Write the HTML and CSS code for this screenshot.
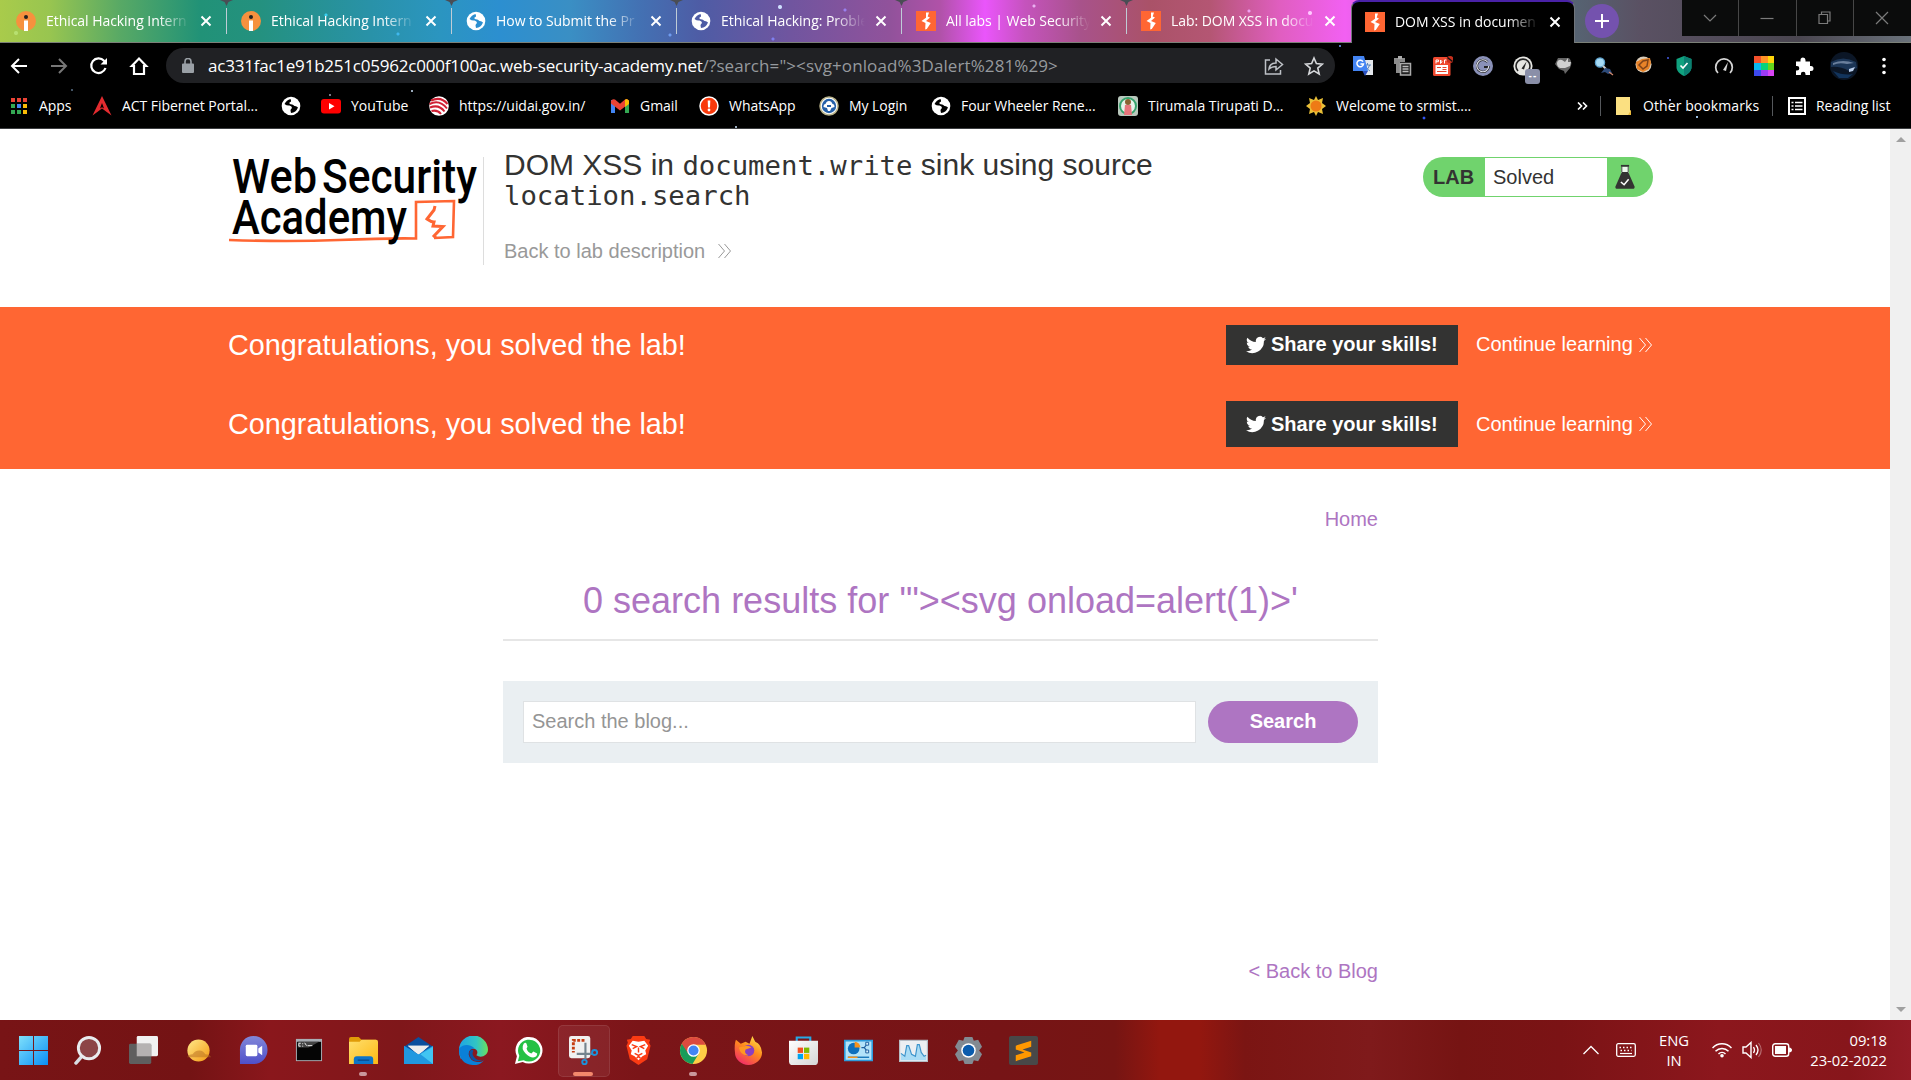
FILE: index.html
```html
<!DOCTYPE html>
<html lang="en">
<head>
<meta charset="utf-8">
<title>DOM XSS in document.write sink using source location.search</title>
<link rel="stylesheet" href="styles.css">
</head>
<body>
<svg class="defs" width="0" height="0" aria-hidden="true">
  <defs>
    <linearGradient id="gWin" x1="0" y1="0" x2="1" y2="1"><stop offset="0" stop-color="#7fe0fb"/><stop offset="1" stop-color="#0a8ef5"/></linearGradient>
    <linearGradient id="gSun" x1="0" y1="0" x2="1" y2="1"><stop offset="0" stop-color="#ffe98a"/><stop offset="1" stop-color="#f59a12"/></linearGradient>
    <linearGradient id="gChat" x1="0" y1="0" x2="0" y2="1"><stop offset="0" stop-color="#8187d8"/><stop offset="1" stop-color="#4f4fc9"/></linearGradient>
    <linearGradient id="gFold" x1="0" y1="0" x2="1" y2="1"><stop offset="0" stop-color="#ffdf6d"/><stop offset="1" stop-color="#fdb813"/></linearGradient>
    <linearGradient id="gEdge" x1="0" y1="0" x2="1" y2="0"><stop offset="0" stop-color="#1fa4e4"/><stop offset=".6" stop-color="#31c5c4"/><stop offset="1" stop-color="#6be05c"/></linearGradient>
    <linearGradient id="gFox" x1=".8" y1="0" x2=".2" y2="1"><stop offset="0" stop-color="#ffe14a"/><stop offset=".45" stop-color="#ff8a1c"/><stop offset="1" stop-color="#f0246f"/></linearGradient>
    <linearGradient id="gStore" x1="0" y1="0" x2="1" y2="1"><stop offset="0" stop-color="#fff"/><stop offset="1" stop-color="#d5d5d5"/></linearGradient>
    <symbol id="globe" viewBox="0 0 20 20"><circle cx="10" cy="10" r="9.300" fill="#fff"/><path d="M9.500 3Q5.500 4 3.500 8q2.500 2 5 1.500 2.500.5 2.500 2.500-1.500 1-1.500 2.500l.5 2.500q5-.5 7-5.500-1.500-1.700-3.500-1.500-1.500-2-4-1.800-1.700-.5-1-1.700 2-.3 1.500-2z" fill="currentColor"/></symbol>
    <symbol id="intern" viewBox="0 0 20 20"><circle cx="10" cy="10" r="10" fill="#f6913e"/><circle cx="10" cy="6" r="2" fill="#222"/><path d="M8 9.500h4V20H8z" fill="#fff"/></symbol>
    <symbol id="burp" viewBox="0 0 20 20"><path d="M0 0h20v20H0z" fill="#f63"/><path d="M10 1.500v5.200L5.500 10l4 2-.3 6.500 1.600-.4 4-6-4.800-2.200 4-3.400-2.300-1 1.300-4z" fill="#fff"/></symbol>
    <symbol id="close" viewBox="0 0 12 12"><path d="m1.500 1.500 9 9m0-9-9 9" stroke="#fff" stroke-width="2" fill="none"/></symbol>
    <symbol id="bird" viewBox="0 0 24 24"><path d="M24 4.600a10 10 0 0 1-2.800.8 5 5 0 0 0 2.200-2.700c-1 .5-2 .9-3.100 1.200a4.900 4.900 0 0 0-8.400 4.500A14 14 0 0 1 1.700 3.200a4.900 4.900 0 0 0 1.500 6.500c-.8 0-1.600-.2-2.200-.6a4.900 4.900 0 0 0 3.900 4.900 5 5 0 0 1-2.200.1 4.900 4.900 0 0 0 4.600 3.400A9.900 9.900 0 0 1 0 19.500a14 14 0 0 0 21.500-12.400A10 10 0 0 0 24 4.600z" fill="#fff"/></symbol>
    <symbol id="chev" viewBox="0 0 14 16"><path d="m1 1 6 7-6 7M7 1l6 7-6 7" fill="none" stroke="currentColor" stroke-width="1"/></symbol>
  </defs>
</svg>

<div class="chrome">
  <div class="strip">
    <div class="tab"><svg class="fav"><use href="#intern"/></svg><span class="label">Ethical Hacking Intern</span><svg class="x"><use href="#close"/></svg></div>
    <div class="tab"><svg class="fav"><use href="#intern"/></svg><span class="label">Ethical Hacking Intern</span><svg class="x"><use href="#close"/></svg></div>
    <div class="tab blue"><svg class="fav"><use href="#globe"/></svg><span class="label">How to Submit the Pr</span><svg class="x"><use href="#close"/></svg></div>
    <div class="tab violet"><svg class="fav"><use href="#globe"/></svg><span class="label">Ethical Hacking: Proble</span><svg class="x"><use href="#close"/></svg></div>
    <div class="tab"><svg class="fav"><use href="#burp"/></svg><span class="label">All labs | Web Security</span><svg class="x"><use href="#close"/></svg></div>
    <div class="tab last"><svg class="fav"><use href="#burp"/></svg><span class="label">Lab: DOM XSS in docu</span><svg class="x"><use href="#close"/></svg></div>
    <div class="tab active"><svg class="fav"><use href="#burp"/></svg><span class="label">DOM XSS in documen</span><svg class="x"><use href="#close"/></svg></div>
    <div class="plus"><svg width="16" height="16" viewBox="0 0 16 16"><path d="M8 1v14M1 8h14" stroke="#fff" stroke-width="2"/></svg></div>
    <div class="controls">
      <span><svg width="16" height="16" viewBox="0 0 16 16"><path d="m2 5 6 6 6-6"/></svg></span>
      <span><svg width="16" height="16" viewBox="0 0 16 16"><path d="M1.500 8.500h13"/></svg></span>
      <span><svg width="16" height="16" viewBox="0 0 16 16"><path d="M2 4.500h8.500v9H2zM4.500 4V2H13v9h-2.500"/></svg></span>
      <span><svg width="16" height="16" viewBox="0 0 16 16"><path d="m2 2 12 12M14 2 2 14"/></svg></span>
    </div>
  </div>

  <div class="toolbar">
    <div class="nav">
      <svg viewBox="0 0 20 20"><path d="M18 10H3m7-7-7 7 7 7" fill="none" stroke="#fff" stroke-width="2"/></svg>
      <svg viewBox="0 0 20 20"><path d="M2 10h15m-7-7 7 7-7 7" fill="none" stroke="#777" stroke-width="2"/></svg>
      <svg viewBox="0 0 20 20"><path d="M16.500 12A7.300 7.300 0 1 1 15 4.800l2 2" fill="none" stroke="#fff" stroke-width="2.200"/><path d="M18 2v6.500h-6.500z" fill="#fff"/></svg>
      <svg viewBox="0 0 20 20"><path d="M5 18V10H2.800L10 2.500 17.200 10H15v8z" fill="none" stroke="#fff" stroke-width="2.200"/></svg>
    </div>
    <div class="omni">
      <svg width="12" height="15" viewBox="0 0 12 15"><path d="M1 5.500h10a1 1 0 0 1 1 1V14a1 1 0 0 1-1 1H1a1 1 0 0 1-1-1V6.500a1 1 0 0 1 1-1z" fill="#9aa0a6"/><path d="M3 6V3.500a3 3 0 0 1 6 0V6" fill="none" stroke="#9aa0a6" stroke-width="1.600"/></svg>
      <span class="url">ac331fac1e91b251c05962c000f100ac.web-security-academy.net<i>/?search="&gt;&lt;svg+onload%3Dalert%281%29&gt;</i></span>
      <svg class="share" width="20" height="20" viewBox="0 0 20 20"><path d="M6 4H1.500v14h15v-4" fill="none" stroke="#bdc1c6" stroke-width="1.500"/><path d="M5 13c.5-4 3-6 7-6V3l6.500 5.500L12 14v-3.500c-3 0-5 .500-7 2.500z" fill="none" stroke="#bdc1c6" stroke-width="1.500"/></svg>
      <svg width="20" height="20" viewBox="0 0 20 20"><path d="m10 2 2.400 5.600 6 .5-4.600 4 1.400 5.900L10 14.900 4.800 18l1.400-5.900-4.600-4 6-.5z" fill="none" stroke="#d5d7da" stroke-width="1.600"/></svg>
    </div>
    <div class="exts">
      <svg viewBox="0 0 20 20"><path d="M8 4h12v15H12z" fill="#e3e7ec"/><path d="M11 9h7m-3.500-2v2m-3 6c3-1 4-3 5-6m-4 1c1 2 3 4 4.500 5" stroke="#5a86c0" fill="none"/><path d="M0 0h11l4 15H0z" fill="#4384f3"/><path d="M9.500 15H15l-3 5z" fill="#2a50c0"/><path d="M10 5.700A3.300 3.300 0 1 0 10.500 8H7.500" stroke="#fff" stroke-width="1.500" fill="none"/></svg>
      <svg viewBox="0 0 20 20"><path d="M1 2h11v4H7v11H3V8H1z" fill="#8c8c8c"/><path d="M5 0h4v3H5z" fill="#aaa"/><path d="M7.500 7.500h10v11.500h-10z" fill="#222" stroke="#aaa" stroke-width="1.500"/><path d="M9.500 10.500h6m-6 2.500h6m-6 2.500h6" stroke="#bbb" stroke-width="1.300"/></svg>
      <svg viewBox="0 0 20 20"><rect x="0" y="1" width="17.500" height="19" rx="1.500" fill="#f0492f"/><path d="M2.500 9h12.500v9H2.500z" fill="#fff"/><path d="M4 11.500h4M4 15.500h9.500m-4-4h4m-4 2h4" stroke="#e9442c"/><path d="M3 7.500V4h2.500v1.700H3M7.500 4v3.500q3-1.800 0-3.500M11.500 7.500V4H14" stroke="#fff" fill="none"/><circle cx="17" cy="3.500" r="3.500" fill="#c62f1c"/><path d="m14.500 1.500 5 4" stroke="#111" stroke-width="1.500"/></svg>
      <svg viewBox="0 0 20 20"><circle cx="10" cy="10" r="10" fill="#8a91b8"/><path d="M14.500 6a6 6 0 1 0 1.300 5H11" stroke="#222" stroke-width="2.200" fill="none"/><path d="M14.500 6a6 6 0 1 0 1.300 4" stroke="#dfe2ef" stroke-width="1.200" fill="none"/></svg>
      <span class="badged"><svg viewBox="0 0 20 20"><circle cx="10" cy="10" r="9.600" fill="#e6e6e2"/><path d="M5 15a7 7 0 1 1 10 0" fill="none" stroke="#222" stroke-width="1.600"/><path d="m8.500 12.500 5-7-2.500 8z" fill="#222"/></svg><b>--</b></span>
      <svg viewBox="0 0 20 20"><path d="M4 2h11q4 4 1 10l-5 6-1-3-5-2-4-5z" fill="#666"/><path d="M3 7q1-4 5-3l3 2 3-4v4h3l-1 4-5 2H6Q3 11 3 7z" fill="#d0d0d0"/></svg>
      <svg viewBox="0 0 20 20"><circle cx="6" cy="6.500" r="4.600" fill="#a6dbf5" stroke="#5b9fcc" stroke-width="1.300"/><path d="m9 10 3 3" stroke="#ccc" stroke-width="2"/><path d="m7 17 4-5 5 1 2 4-4 1-3-2z" fill="#2d4a79"/><path d="m15 16 4 3" stroke="#d48b70" stroke-width="1.200"/></svg>
      <svg viewBox="0 0 20 20"><circle cx="9.500" cy="8.500" r="8" fill="#d9cdbb"/><path d="m2 6 6-3 8-1 1 5-2 6-6 3-6-3z" fill="#e88328"/><path d="m5 9 4-4 5-1-1 6-4 3z" fill="none" stroke="#7f4319" stroke-width="1.500"/></svg>
      <svg viewBox="0 0 20 20"><path d="m10 0 7.500 3v8c0 4-3 7-7.500 9-4.500-2-7.500-5-7.500-9V3z" fill="#10a27f"/><path d="M10 0 17.500 3v8c0 4-3 7-7.500 9z" fill="#0a7f71"/><path d="m6.500 9.500 2.500 2.500 4.500-5" stroke="#fff" stroke-width="1.600" fill="none"/></svg>
      <svg viewBox="0 0 20 20"><path d="M4 17A8.300 8.300 0 1 1 16 17" fill="none" stroke="#d5d5d5" stroke-width="1.700"/><path d="m9 14 5-8-2 9z" fill="#d5d5d5"/></svg>
      <svg viewBox="0 0 20 20"><path d="M0 0h7v7H0z" fill="#f4512c"/><path d="M7 0h7v7H7z" fill="#ff9226"/><path d="M14 0h6v7h-6z" fill="#ffd60a"/><path d="M0 7h7v7H0z" fill="#0ab8ef"/><path d="M7 7h7v7H7z" fill="#08d27c"/><path d="M14 7h6v7h-6z" fill="#65d61d"/><path d="M0 14h7v6H0z" fill="#3c49ee"/><path d="M7 14h7v6H7z" fill="#9d3bf5"/><path d="M14 14h6v6h-6z" fill="#d945f4"/></svg>
      <svg viewBox="0 0 20 20"><path d="M2 5.500h4.500V4a2.500 2.500 0 0 1 5 0v1.500H16V10h1a2.500 2.500 0 0 1 0 5h-1v4h-4.500v-1a2.300 2.300 0 0 0-4.600 0v1H2v-4.500h1a2.300 2.300 0 0 0 0-4.600H2z" fill="#fff"/></svg>
      <svg class="avatar" viewBox="0 0 28 28"><circle cx="14" cy="14" r="14" fill="#0b1626"/><path d="M1 10q12-7 25 0l1 6-8 3q-9-5-18-4z" fill="#1b3556"/><path d="M3 11q10-4 21 0l-7 1Q9 10 3 13z" fill="#6a7f9c"/><path d="m19 17 6-2-2 4-4 1z" fill="#b9cdea"/><path d="M3 19q11 5 20 3l-5 4H9z" fill="#12345c"/></svg>
      <svg viewBox="0 0 20 20"><circle cx="10" cy="3.500" r="1.800" fill="#fff"/><circle cx="10" cy="10" r="1.800" fill="#fff"/><circle cx="10" cy="16.500" r="1.800" fill="#fff"/></svg>
    </div>
  </div>

  <div class="marks">
    <div class="list">
      <a><svg viewBox="0 0 20 20"><path d="M2 2h4v4H2zM8 2h4v4H8zM14 2h4v4h-4z" fill="#ea4335"/><path d="M2 8h4v4H2zM2 14h4v4H2zM8 14h4v4H8z" fill="#34a853"/><path d="M8 8h4v4H8z" fill="#4285f4"/><path d="M14 8h4v4h-4zM14 14h4v4h-4z" fill="#fbbc05"/></svg><span>Apps</span></a>
      <a><svg viewBox="0 0 20 20"><path d="m10 0 9.500 19.500-9.500-7-9.500 7z" fill="#e32b2f"/><path d="m10 7 2 5.500-2-1.200-2 1.200z" fill="#000"/></svg><span>ACT Fibernet Portal...</span></a>
      <a><svg><use href="#globe"/></svg></a>
      <a><svg viewBox="0 0 20 20"><rect y="3" width="20" height="14.500" rx="3" fill="#f00"/><path d="m8 7 5.500 3.200L8 13.500z" fill="#fff"/></svg><span>YouTube</span></a>
      <a><svg viewBox="0 0 20 20"><circle cx="10" cy="10" r="9.800" fill="#fff"/><path d="M2 4.500Q12 0 18.500 8M.5 8q10-5 17.500 4.500M1 11.500q9-3.500 14.500 4M2.500 15q6-1.500 9.500 3" fill="none" stroke="#cf1f33" stroke-width="2"/></svg><span>https://uidai.gov.in/</span></a>
      <a><svg viewBox="0 0 20 20"><path d="M1 4h4v13H1z" fill="#4285f4"/><path d="M15 4h4v13h-4z" fill="#34a853"/><path d="M1 5q1-2.500 4-1.500l5 4.200 5-4.200q3-1 4 1.500v2.500l-9 7-9-7z" fill="#ea4335"/><path d="m15 4 1-1q2 0 3 2v3l-4 3z" fill="#fbbc04"/></svg><span>Gmail</span></a>
      <a><svg viewBox="0 0 20 20"><circle cx="10" cy="10" r="9" fill="#f9390b" stroke="#fff" stroke-width="1.500"/><path d="M8.700 4.500h2.600l-.3 7H9z" fill="#fff"/><circle cx="10" cy="14" r="1.400" fill="#fff"/></svg><span>WhatsApp</span></a>
      <a><svg viewBox="0 0 20 20"><circle cx="10" cy="10" r="9" fill="#fff" stroke="#b9b38a" stroke-width="1.500"/><circle cx="10" cy="10" r="7.200" fill="#2560a8"/><path d="M4.500 11q0-3 2-3 1-3 3.500-3t3.500 3q2 0 2 3l-3 1-1.500 3h-2l-1-3z" fill="#fff"/><path d="M8 9h4v2H8z" fill="#2560a8"/></svg><span>My Login</span></a>
      <a><svg><use href="#globe"/></svg><span>Four Wheeler Rene...</span></a>
      <a><svg viewBox="0 0 20 20"><rect width="20" height="20" rx="3" fill="#b9c8bd"/><circle cx="10" cy="10" r="8" fill="#e8f2ea" stroke="#36a36d" stroke-width="2"/><circle cx="10" cy="6" r="3" fill="#8a6333"/><path d="m6 19 1-10h6l1 10z" fill="#e8757d"/></svg><span>Tirumala Tirupati D...</span></a>
      <a><svg viewBox="0 0 20 20"><path d="m10 0 2 4 5-2-1 5 4 3-4 3 1 5-5-2-2 4-2-4-5 2 1-5-4-3 4-3-1-5 5 2z" fill="#e9bf37"/><circle cx="10" cy="10" r="5.500" fill="#ee7b16"/></svg><span>Welcome to srmist....</span></a>
    </div>
    <div class="right">
      <svg class="more" width="11" height="8" viewBox="0 0 11 8"><path d="m1 .5 3.500 3.500L1 7.500M6 .500 9.500 4 6 7.500" fill="none" stroke="#fff" stroke-width="1.600"/></svg>
      <a class="other"><svg viewBox="0 0 20 20"><path d="M2 1h14v13l1 1v4H2z" fill="#fbe081"/><path d="M17 14v5h-3z" fill="#eab93a"/></svg><span>Other bookmarks</span></a>
      <a class="read"><svg viewBox="0 0 20 20"><rect x="2" y="2" width="16" height="16" fill="none" stroke="#fff" stroke-width="2"/><path d="M4.500 6.500h2m-2 3.500h2m-2 3.500h2m1.500-7h7.500M8 10h7.500M8 13.500h7.500" stroke="#fff" stroke-width="1.700"/></svg><span>Reading list</span></a>
    </div>
  </div>
</div>

<div class="view">
  <main class="page">
    <header class="head">
      <div class="logo">
        <svg width="255" height="108" viewBox="0 0 255 108">
          <path d="M1 83q60 2 110 0t77-1.500V45l38-1-1 36-19 1" fill="none" stroke="#f63" stroke-width="2.600"/>
          <path d="m207 49-1 4-7 9q4 3 7 3l-1 4 10 .5-9 9.500 2 2" fill="none" stroke="#f63" stroke-width="3"/>
          <text x="4" y="36" textLength="85" lengthAdjust="spacingAndGlyphs">Web</text>
          <text x="94" y="36" textLength="155" lengthAdjust="spacingAndGlyphs">Security</text>
          <text x="4" y="77" textLength="175" lengthAdjust="spacingAndGlyphs">Academy</text>
        </svg>
      </div>
      <div class="title">
        <h2>DOM XSS in <code>document.write</code> sink using source<br><code>location.search</code></h2>
        <a>Back to lab description<svg width="15" height="16"><use href="#chev"/></svg></a>
      </div>
      <div class="pill">
        <b>LAB</b><span>Solved</span>
        <svg width="20" height="26" viewBox="0 0 22 27"><path d="M7 2h8v8H7z" fill="#eefaee"/><path d="M6.500 1.200h9" stroke="#333" stroke-width="2"/><path d="M7.500 2v6m7-6v6" stroke="#333"/><path d="M7.500 8h7l7 16q.5 2.500-2 2.500h-17q-2.500 0-2-2.500z" fill="#333332"/><path d="m6.500 19 3.500 3 5-6" fill="none" stroke="#fff" stroke-width="1.700"/></svg>
      </div>
    </header>
    <section class="banner">
      <div class="row"><p>Congratulations, you solved the lab!</p><a class="share-btn"><svg width="20" height="20"><use href="#bird"/></svg>Share your skills!</a><a class="cont">Continue learning<svg width="15" height="16"><use href="#chev"/></svg></a></div>
      <div class="row tall"><p>Congratulations, you solved the lab!</p><a class="share-btn"><svg width="20" height="20"><use href="#bird"/></svg>Share your skills!</a><a class="cont">Continue learning<svg width="15" height="16"><use href="#chev"/></svg></a></div>
    </section>
    <section class="blog">
      <a class="home">Home</a>
      <h1>0 search results for '"&gt;&lt;svg onload=alert(1)&gt;'</h1>
      <form class="search"><input type="text" placeholder="Search the blog..."><button type="button">Search</button></form>
      <a class="back">&lt; Back to Blog</a>
    </section>
  </main>
  <div class="scroll"><i class="up"></i><i class="down"></i></div>
</div>

<footer class="taskbar">
  <div class="apps">
    <span><svg viewBox="0 0 30 30"><path d="M0 0h14.500v14.500H0zM15.500 0H30v14.500H15.500zM0 15.500h14.500V30H0zM15.500 15.500H30V30H15.500z" fill="url(#gWin)"/></svg></span>
    <span><svg viewBox="0 0 30 30"><path d="m9 20-7 8" stroke="#d8dee4" stroke-width="3.500" stroke-linecap="round"/><circle cx="15.500" cy="12.500" r="11" fill="#8c4547" stroke="#e9ecef" stroke-width="3"/></svg></span>
    <span><svg viewBox="0 0 30 30"><rect x="8" y="0" width="22" height="21" rx="1.500" fill="#f1f1f1"/><rect x="0" y="8" width="23" height="21" rx="1.500" fill="#5f5f5f"/><path d="M8 8h15v13H8z" fill="#b5b2b2"/></svg></span>
    <span><svg viewBox="0 0 30 30"><circle cx="15" cy="15" r="11.500" fill="url(#gSun)"/><path d="M3 22q2-3 6-3 2-4 7-4 4 0 6 4 5 0 6 3z" fill="#b36b22" opacity=".5"/></svg></span>
    <span><svg viewBox="0 0 30 30"><path d="M15 0a14 14 0 0 1 0 29H1V15A14 14 0 0 1 15 0z" fill="url(#gChat)"/><rect x="7" y="9" width="12" height="12" rx="1.500" fill="#fff"/><path d="m20 13 4-3v10l-4-3z" fill="#fff"/></svg></span>
    <span><svg viewBox="0 0 30 30"><path d="M2 3h27v23H2z" fill="#a9adb3"/><path d="M3 6h25v19H3z" fill="#050505"/><path d="M4 6h22L15 12H4z" fill="#444"/><path d="M5 7.500h2M5 7.500v3h2m2-3v1m0 1.500v1m2-4 2 3m1 0h5" stroke="#eee" fill="none"/></svg></span>
    <span class="run"><svg viewBox="0 0 30 30"><path d="M0 3q0-2 2-2h8l3 3h15v4H0z" fill="#e09b08"/><path d="M0 6h11l2-2h15q2 0 2 2v23H0z" fill="url(#gFold)"/><path d="M5 29v-5q0-3 3-3h14q3 0 3 3v5z" fill="#0d74c8"/><path d="M9 25h12" stroke="#0a4d91" stroke-width="1.500"/></svg></span>
    <span><svg viewBox="0 0 30 30"><path d="m15 1 15 10v6H0v-6z" fill="#0b4f9e"/><path d="M4 10h22L15 20z" fill="#eee"/><path d="m0 10 15 9 15-9v19H0z" fill="#2098e0"/><path d="M4 10h22l-11 9z" fill="#eee"/><path d="m30 11-13 8 13 10z" fill="#41c5f2"/></svg></span>
    <span><svg viewBox="0 0 30 30"><path d="M0 15a15 15 0 0 1 30-1c0 7-8 9-12 6 3-5-1-8-6-7L2 24Q0 20 0 15z" fill="url(#gEdge)"/><path d="M0 13q5-5 12-3 3 1 4 3-6 0-6 6 1 7 9 8 5 0 7-2-5 6-12 5Q0 29 0 13z" fill="#0a80d8"/><path d="M13 14q-3 2-2 6 2 7 10 6l6-2q-8 3-12-3-2-3 0-6z" fill="#0b53a5"/></svg></span>
    <span><svg viewBox="0 0 30 30"><path d="m1 29 2-8A14 13.800 0 1 1 9 27z" fill="#fff"/><path d="m4 26 1.500-5.500A11.500 11.300 0 1 1 10 25z" fill="#25c145"/><path d="M10 8q2-2 3 0l1 3-1 2q1 4 5 5l2-2 4 2q0 3-3 4-4 1-9-4-5-5-2-10z" fill="#fff"/></svg></span>
    <span class="sel"><svg viewBox="0 0 30 30"><rect width="22" height="23" rx="2.500" fill="#f0f0f0"/><path d="M16 4.500H4.500V17" fill="none" stroke="#c63c10" stroke-width="3" stroke-dasharray="3 1.500"/><path d="M17 7v17M8 18.500h16" stroke="#74838d" stroke-width="2.200"/><circle cx="26.500" cy="17" r="2.600" fill="none" stroke="#1b93dc" stroke-width="2"/><circle cx="16" cy="27" r="2.300" fill="none" stroke="#1b93dc" stroke-width="2"/></svg></span>
    <span><svg viewBox="0 0 30 30"><path d="M9 0 7 3 3 4l1 3-1.500 3L6 24l9 6 9-6 3.500-14L26 7l1-3-4-1-2-3z" fill="#fa3b13"/><path d="m9 5 6 1 6-1 4 5-3 5 1 4-4 2-4 4-4-4-4-2 1-4-3-5z" fill="#fff"/><path d="m8 9 5 2-4 2m13-4-5 2 4 2m-6-1v5m-4 1 4 2 4-2m-6 5 2-2 2 2" fill="none" stroke="#fa3b13" stroke-width="1.500"/></svg></span>
    <span class="run"><svg viewBox="0 0 30 30"><circle cx="15" cy="15" r="14" fill="#ffcd46"/><path d="M2.900 8A14 14 0 0 0 14 29l6.500-11L15 15z" fill="#199c5a"/><path d="M15 9h12.600A14 14 0 0 0 2.900 8L9.500 18z" fill="#dc4a3f"/><circle cx="15" cy="15" r="6.500" fill="#fff"/><circle cx="15" cy="15" r="5.200" fill="#4285f4"/></svg></span>
    <span><svg viewBox="0 0 30 30"><path d="m2 4 5 4 5-2 4 2 3-8 3 6q6 2 7 11a14 13 0 0 1-28 0Q0 9 2 4z" fill="url(#gFox)"/><circle cx="15" cy="15" r="6" fill="#8a3fc2"/><path d="m5 12 8-2q3 0 5 2l-6 2q-2 4 3 6-8 1-10-8z" fill="#ff9822"/></svg></span>
    <span><svg viewBox="0 0 30 30"><path d="M8 7V1.500h14V7" fill="none" stroke="#27a8e3" stroke-width="2.200"/><path d="M0 5h30v21q0 4-4 4H4q-4 0-4-4z" fill="url(#gStore)"/><path d="M9 12h5.500v5.500H9z" fill="#f25022"/><path d="M15.500 12H21v5.500h-5.500z" fill="#7fba00"/><path d="M9 18.500h5.500V24H9z" fill="#00a4ef"/><path d="M15.500 18.500H21V24h-5.500z" fill="#ffb900"/></svg></span>
    <span><svg viewBox="0 0 30 30"><path d="M.8 4.800h28.400v20.500H.8z" fill="#b3e3f9" stroke="#2d9cdc" stroke-width="1.700"/><circle cx="10" cy="13" r="6" fill="#0e6fbd"/><path d="M11 12V6a6 6 0 0 1 6 6z" fill="#f7931e"/><path d="M18 12h3l3-4m-3 4 3 4" stroke="#1e5f9f" stroke-width="1.200" fill="none"/><path d="M22.500 6.500h3v3h-3zm0 8h3v3h-3z" fill="#d9f0fb" stroke="#1e5f9f"/><path d="M4 22h22" stroke="#1d7abb" stroke-width="1.500"/><path d="M4 22h10" stroke="#f7931e" stroke-width="1.500"/></svg></span>
    <span><svg viewBox="0 0 30 30"><path d="M.6 4.600h28.800v21.800H.6z" fill="#eceff2" stroke="#b5bcc4" stroke-width="1.200"/><path d="M2 25v-7l4 3 2-11h2l3 9 4 2 2-12h2l2 8 3 4 2-1v5z" fill="#a9dcf5"/><path d="m2 18 4 3 2-11h2l3 9 4 2 2-12h2l2 8 3 4 2-1" fill="none" stroke="#3d94cb" stroke-width="1.200"/></svg></span>
    <span><svg viewBox="0 0 30 30"><path d="m11 1 8 0 1.500 4L25 4l4 7-3 4 3 4-4 7-4.500-1L19 29h-8l-1.500-4L5 26l-4-7 3-4-3-4 4-7 4.500 1z" fill="#828a92"/><circle cx="15" cy="15" r="7.500" fill="#fff"/><circle cx="15" cy="15" r="6" fill="#0a5cad"/></svg></span>
    <span><svg viewBox="0 0 30 30"><rect width="30" height="30" rx="2" fill="#484848"/><path d="m7 10 16-5v6l-9 3 9 3v4L7 26v-6l9-3-9-3z" fill="#ff9800"/></svg></span>
  </div>
  <div class="tray">
    <svg class="caret" width="16" height="10" viewBox="0 0 16 10"><path d="m.5 9 7.500-7.500L15.500 9" fill="none" stroke="#fff" stroke-width="1.300"/></svg>
    <svg class="kbd" width="20" height="14" viewBox="0 0 20 14"><rect x=".7" y=".7" width="18.600" height="12.600" rx="1.500" fill="none" stroke="#fff" stroke-width="1.300"/><path d="M3.500 4.500h13M4.500 7.500h11" stroke="#fff" stroke-width="1.500" stroke-dasharray="1.500 2"/><path d="M4 10.500h12" stroke="#fff" stroke-width="1.200"/></svg>
    <div class="lang">ENG<br>IN</div>
    <svg class="wifi" width="20" height="16" viewBox="0 0 20 16"><path d="M.5 6a13 13 0 0 1 19 0M3.500 9.200a9 9 0 0 1 13 0M6.500 12a5 5 0 0 1 7 0" fill="none" stroke="#fff" stroke-width="1.500"/><circle cx="10" cy="13.800" r="1.800" fill="#fff"/></svg>
    <svg class="vol" width="20" height="18" viewBox="0 0 20 18"><path d="M1 6h3l5-4.500v15L4 12H1z" fill="none" stroke="#fff" stroke-width="1.400"/><path d="M11.500 6q2 3 0 6M14 4q4 5 0 10" fill="none" stroke="#fff" stroke-width="1.300"/><path d="M16.500 2q5.500 7 0 14" fill="none" stroke="#b46a6d" stroke-width="1.200"/></svg>
    <svg class="bat" width="20" height="14" viewBox="0 0 20 14"><rect x=".7" y=".7" width="16" height="12.600" rx="2.500" fill="none" stroke="#fff" stroke-width="1.400"/><path d="M3 3h11v8H3z" fill="#fff"/><path d="M17 4.500q3 .5 3 2.500t-3 2.500z" fill="#fff"/></svg>
    <div class="clock">09:18<br>23-02-2022</div>
  </div>
</footer>
</body>
</html>
```
FILE: styles.css
```css
* { box-sizing: border-box; }
body { margin: 0; height: 1080px; display: flex; flex-direction: column; overflow: hidden; font-family: "Liberation Sans", Arial, sans-serif; background: #fff; }
.defs { position: absolute; }
svg { display: block; flex: none; }

/* browser window */
.chrome { height: 129px; background: #000; border-bottom: 1px solid #3b3d40; color: #fff; font: 14px/20px "Open Sans", "Noto Sans", sans-serif; letter-spacing: -.05px;
  background-image:
    radial-gradient(circle at 412px 91px, #9ab 0 1px, transparent 1.500px),
    radial-gradient(circle at 330px 95px, #778 0 1px, transparent 1.500px),
    radial-gradient(circle at 72px 90px, #456 0 1px, transparent 1.500px),
    radial-gradient(circle at 736px 127px, #9ab 0 1px, transparent 1.500px),
    radial-gradient(circle at 1424px 118px, #35e 0 1px, transparent 1.800px),
    radial-gradient(circle at 1340px 46px, #57b 0 1px, transparent 1.500px),
    radial-gradient(circle at 1670px 100px, #9ad 0 1px, transparent 1.500px),
    radial-gradient(circle at 1697px 117px, #9bd 0 1px, transparent 1.500px),
    radial-gradient(circle at 1668px 58px, #34a 0 1px, transparent 1.500px); }
.strip { height: 43px; display: flex; border-bottom: 1px solid #7b8078;
  background:
    radial-gradient(circle at 780px 7px, #cfe0ff 0 1.500px, transparent 2.500px),
    radial-gradient(circle at 16px 33px, #b7e070 0 1.500px, transparent 2.500px),
    radial-gradient(circle at 326px 15px, #3bd0f0 0 1px, transparent 2px),
    radial-gradient(circle at 398px 34px, #3fb8ee 0 1px, transparent 2px),
    radial-gradient(circle at 670px 35px, #6f9cf0 0 1px, transparent 2px),
    radial-gradient(circle at 773px 39px, #7f7ff0 0 1px, transparent 2px),
    radial-gradient(circle at 845px 10px, #9a80f0 0 1px, transparent 2px),
    radial-gradient(circle at 1034px 6px, #e9b0f0 0 1px, transparent 2px),
    radial-gradient(circle at 1249px 11px, #f0a0f0 0 1px, transparent 2px),
    radial-gradient(circle at 1310px 13px, #ffc8ff 0 1.500px, transparent 2.500px),
    linear-gradient(90deg, #a9cb4b 0, #98c550 50px, #58a965 120px, #219277 200px, #24917f 260px, #2992a8 370px, #2b95c0 440px, #2c8fd0 500px, #3a8fc4 570px, #4371b3 640px, #4e5ca5 700px, #70559f 790px, #91529b 890px, #b052a8 940px, #ea55fb 985px, #c553bd 1025px, #a8528b 1080px, #aa5268 1150px, #b45673 1210px, #e05ec0 1280px, #f260f2 1345px, #566372 1575px, #5a5163 1640px, #4a4650 1800px, #6a727b 1911px); }
.tab { position: relative; width: 225px; height: 42px; padding: 0 14px 0 14px; display: flex; align-items: center; border-image: linear-gradient(transparent 20%, #bfccd6 20% 80%, transparent 80%) 1; border-style: solid; border-width: 0 1px 0 0; }
.tab:not(.active, .last)::after { content: ""; position: absolute; right: -7px; top: 0; width: 13px; height: 6px; background: #4a4d54; clip-path: polygon(0 0, 100% 0, 65% 35%, 50% 100%, 35% 35%); }
.tab:first-child { width: 227px; padding-left: 16px; }
.tab.last { width: 224px; border-image: none; border-color: transparent; }
.tab.active { width: 224px; height: 43px; background: #000; border-image: none; border: 1px solid #70757b; border-width: 2px 1px 0; border-top-color: #4a22a8; border-radius: 8px 8px 0 0; padding: 0 13px 1px 13px; }
.fav { width: 20px; height: 20px; }
.blue .fav { color: #2c8fd0; }
.violet .fav { color: #4e5ca5; }
.label { flex: 1; margin-left: 10px; min-width: 0; white-space: nowrap; -webkit-mask-image: linear-gradient(90deg, #000 78%, transparent); mask-image: linear-gradient(90deg, #000 78%, transparent); }
.x { width: 12px; height: 12px; margin-left: 10px; }
.plus { width: 34px; height: 34px; margin: 4px 0 0 10px; border-radius: 50%; background: #7452ae; display: grid; place-items: center; }
.controls { margin-left: auto; width: 229px; height: 36px; display: grid; grid-template-columns: repeat(4, 1fr); background: #0b0c0c; }
.controls span { display: grid; place-items: center; border-right: 1px solid #474747; }
.controls span:last-child { border: 0; }
.controls path { fill: none; stroke: #7b7b7b; stroke-width: 1.200; }

.toolbar { height: 45px; display: flex; align-items: center; }
.nav { width: 166px; padding-left: 9px; display: flex; gap: 20px; }
.nav svg { width: 20px; height: 20px; }
.omni { width: 1169px; height: 35px; border-radius: 18px; background: #202124; display: flex; align-items: center; padding: 0 11px 0 16px; }
.url { flex: 1; margin-left: 14px; font-size: 17px; letter-spacing: -.22px; white-space: nowrap; }
.url i { font-style: normal; color: #969a9e; letter-spacing: .1px; }
.share { margin-right: 20px; }
.exts { margin-left: 8px; display: grid; grid-template-columns: repeat(14, 40.100px); place-items: center; }
.exts svg { width: 20px; height: 20px; color: #000; }
.exts .avatar { width: 28px; height: 28px; }
.badged { position: relative; }
.badged b { position: absolute; left: 12px; top: 13px; width: 15px; height: 15px; border-radius: 3px; background: #8a8fa8; font: bold 10px/14px "Liberation Sans", sans-serif; letter-spacing: 1px; text-align: center; }

.marks { height: 36px; display: flex; align-items: center; justify-content: space-between; color: #fff; }
.marks a { display: flex; align-items: center; gap: 10px; white-space: nowrap; }
.marks a svg { width: 20px; height: 20px; color: #000; }
.list { padding-left: 9px; display: grid; grid-template-columns: 83px 189px 40px 108px 181px 89px 120px 112px 187px 188px 170px; }
.right { display: flex; align-items: center; width: 334px; }
.more { margin-right: 12px; }
.right a { border-left: 1px solid #55585c; padding-left: 14px; }
.right a.other { width: 172px; padding-left: 13px; }
.right a.other span { letter-spacing: .08px; margin-left: -1px; }
.right a.read span { margin-left: -1px; }

/* page */
.view { height: 891px; display: flex; }
.page { flex: 1; }
.scroll { width: 21px; background: #f0f0f0; display: flex; flex-direction: column; justify-content: space-between; align-items: center; padding: 8px 0; }
.scroll i { border: 5px solid transparent; }
.scroll .up { border-bottom-color: #a0a0a0; border-top: 0; }
.scroll .down { border-top-color: #a0a0a0; border-bottom: 0; }
.head { height: 178px; padding: 28px 237px 0 228px; display: flex; }
.logo { width: 256px; height: 108px; border-right: 1px solid #ddd; }
.logo text { font: 500 47.500px Roboto, "Liberation Sans", sans-serif; }
.title { flex: 1; padding-left: 20px; }
h2 { margin: -7px 0 0; font-size: 30px; line-height: 30px; font-weight: 400; color: #333332; white-space: nowrap; }
code { font-family: "DejaVu Sans Mono", monospace; font-size: 27.300px; line-height: 0; }
.title a { margin-top: 29px; display: flex; align-items: center; gap: 12px; font-size: 20px; line-height: 24px; color: #999; }
.pill { width: 230px; height: 40px; border-radius: 20px; background: #70d36d; display: flex; align-items: center; font-size: 20px; color: #333332; }
.pill b { width: 62px; padding-left: 10px; }
.pill span { width: 122px; height: 38px; line-height: 38px; padding-left: 8px; background: #fff; margin-right: 8px; }
.banner { height: 162px; background: #f63; padding: 18px 237px 22px 228px; display: flex; flex-direction: column; gap: 36px; color: #fff; }
.row { height: 40px; display: flex; align-items: center; font-size: 20px; }
.row.tall { height: 46px; }
.row p { flex: 1; margin: 0; font-size: 28.800px; }
.share-btn { align-self: stretch; width: 232px; padding-left: 20px; background: #333332; font-weight: 700; display: flex; align-items: center; gap: 5px; }
.row:first-child .share-btn, .row:first-child .cont { padding-bottom: 1px; }
.cont { margin-left: 18px; width: 177px; display: flex; align-items: center; justify-content: space-between; white-space: nowrap; }
.blog { width: 875px; margin-left: 503px; display: flex; flex-direction: column; color: #ae75c2; font-size: 20px; line-height: 24px; }
.home { align-self: flex-end; margin-top: 38px; }
h1 { margin: 47px 0 0; height: 63px; font-size: 36px; line-height: 46px; font-weight: 400; text-align: center; border-bottom: 2px solid #e6e6e6; white-space: nowrap; }
.search { margin: 40px 0 0; height: 82px; padding: 20px; background: #eaeff2; display: flex; gap: 12px; }
input { flex: 1; min-width: 0; padding: 0 8px 2px; border: 1px solid #dfe2e4; background: #fff; font: 20px "Liberation Sans", sans-serif; }
input::placeholder { color: #959595; opacity: 1; }
button { width: 150px; padding-bottom: 3px; border: 0; border-radius: 21px; background: #ae75c2; color: #fff; font: bold 20px "Liberation Sans", sans-serif; }
.back { align-self: flex-end; margin-top: 196px; }

/* taskbar */
.taskbar { height: 60px; display: flex; justify-content: space-between; background: linear-gradient(90deg, #781416 0, #741314 190px, #8a171c 270px, #7f171a 400px, #8b1820 500px, #7b1518 640px, #761416 1000px, #761513 1115px, #93170f 1160px, #93170f 1200px, #7b1513 1245px, #7f1a1b 1370px, #761413 1460px, #7b1315 1560px, #8c171d 1720px, #87161b 1850px, #931b25 1911px); }
.apps { display: grid; grid-template-columns: repeat(19, 55px); padding-left: 5.500px; }
.apps span { position: relative; display: grid; place-items: center; }
.apps svg { width: 29px; height: 29px; position: relative; }
.sel::before { content: ""; position: absolute; left: 2px; top: 5px; width: 50px; height: 50px; border-radius: 5px; background: #ffffff10; border: 1px solid #ffffff18; }
.run::after, .sel::after { content: ""; position: absolute; left: 23px; top: 52px; width: 8px; height: 4px; border-radius: 2px; background: #c9989c; }
.sel::after { left: 17px; width: 20px; background: #f4886c; }
.tray { width: 328px; padding-right: 24px; display: flex; align-items: center; color: #fff; font: 14.800px/20px "Open Sans", "Noto Sans", sans-serif; letter-spacing: -.05px; }
.kbd { margin-left: 17px; }
.lang { width: 76px; text-align: center; }
.wifi { margin-right: 10px; }
.vol { margin-right: 10px; }
.clock { margin-left: auto; text-align: right; white-space: nowrap; }
```
